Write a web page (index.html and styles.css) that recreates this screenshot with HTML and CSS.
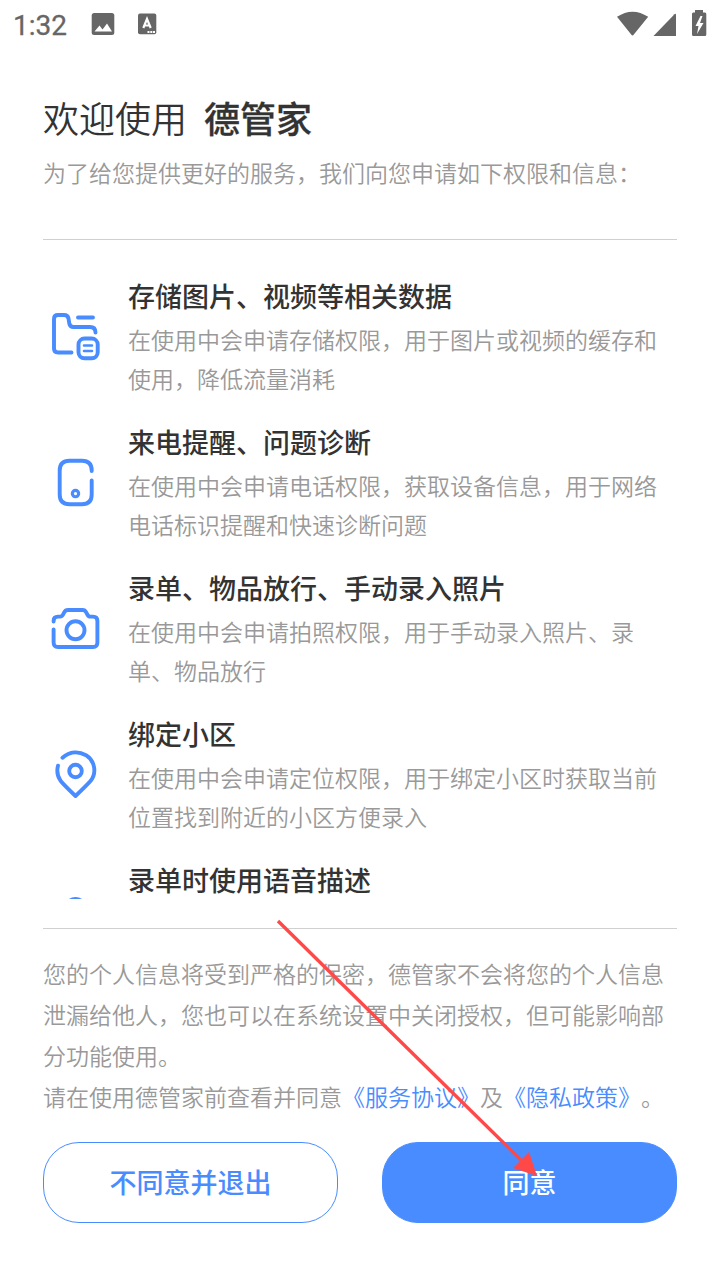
FILE: index.html
```html
<!DOCTYPE html>
<html lang="zh-CN">
<head>
<meta charset="utf-8">
<title>德管家</title>
<link rel="stylesheet" href="styles.css">
</head>
<body>
<div class="screen">
  <header class="status">
    <span class="clock">1:32</span>
    <svg class="status-left" width="70" height="50" viewBox="88 0 70 50">
      <rect x="91.7" y="13" width="22.6" height="22" rx="2.5"/>
      <path class="cut" d="M94.500 31.500L99.500 25.500L102.500 29.500L107 23.500L112 31.500Z"/>
      <rect x="138" y="13.500" width="18.300" height="20.800" rx="2"/>
      <path class="letter" d="M143.300 28L147 19L150.700 28M144.500 25.500H149.500"/>
      <path class="cut" d="M147.500 31h2v2h-2zM150.300 31h2v2h-2zM153 31h2v2h-2z"/>
    </svg>
    <svg class="status-right" width="100" height="50" viewBox="612 0 100 50">
      <path d="M617 16.800Q632.500 6.500 648.200 16.800L633.800 34.500Q632.500 36.500 631.200 34.500Z"/>
      <path d="M653.500 36L674.500 14.200Q676 13 676 14.800V36Z"/>
      <path d="M695 12.500V10H703V12.500H705Q706.300 12.500 706.300 14V34.500Q706.300 36 705 36H693.200Q692 36 692 34.500V14Q692 12.500 693.200 12.500Z"/>
      <path class="cut" d="M700.500 16L695.500 26H698.500L697 34L703.500 23H700L702.500 16Z"/>
    </svg>
  </header>

  <main class="content">
    <h1 class="welcome">欢迎使用<b class="brand">德管家</b></h1>
    <p class="intro">为了给您提供更好的服务，我们向您申请如下权限和信息：</p>

    <section class="permissions">
      <article class="item">
        <svg class="icon" viewBox="3 0 64 70">
          <path d="M31.500 52.500H18Q14 52.500 14 48.500V19Q14 15 18 15H24Q27.800 15 28.500 18.500L29.300 23.500Q30 27 33.500 27H50Q55.500 27 55.500 32.500M38 17.500H53"/>
          <rect x="38.500" y="38.500" width="19.200" height="19.800" rx="6"/>
          <path class="thin" d="M44 45.500H52M44 51H52"/>
        </svg>
        <div class="copy">
          <h2>存储图片、视频等相关数据</h2>
          <p>在使用中会申请存储权限，用于图片或视频的缓存和使用，降低流量消耗</p>
        </div>
      </article>
      <article class="item">
        <svg class="icon" viewBox="3 -4 64 70">
          <path d="M51.700 21V20.500Q51.700 10.800 42 10.800H29.500Q19.700 10.800 19.700 20.500V44.500Q19.700 54.200 29.500 54.200H42Q51.700 54.200 51.700 44.500V30.500"/>
          <circle class="dot" cx="35.500" cy="43.600" r="3.200"/>
        </svg>
        <div class="copy">
          <h2>来电提醒、问题诊断</h2>
          <p>在使用中会申请电话权限，获取设备信息，用于网络电话标识提醒和快速诊断问题</p>
        </div>
      </article>
      <article class="item">
        <svg class="icon" viewBox="3 -3 64 70">
          <path d="M13.600 26.500V26Q13.600 21.600 18 21.600H20Q22 21.600 23 19.700L24.200 17.300Q25.400 15 28 15H42.500Q45 15 46.200 17.300L47.500 19.700Q48.500 21.600 50.500 21.600H53Q57.400 21.600 57.400 26V47.500Q57.400 52 53 52H18Q13.600 52 13.600 47.500V34.500"/>
          <circle cx="35.500" cy="35.300" r="9"/>
        </svg>
        <div class="copy">
          <h2>录单、物品放行、手动录入照片</h2>
          <p>在使用中会申请拍照权限，用于手动录入照片、录单、物品放行</p>
        </div>
      </article>
      <article class="item">
        <svg class="icon" viewBox="3 -2 64 70">
          <path d="M22.500 17.800C30 11 39 11.300 46 15.200C55 21 57 33 50.500 41Q47 45 35.500 56Q24 45 20.700 41Q15.800 34 18 25.700"/>
          <circle cx="35.500" cy="31" r="6.300"/>
        </svg>
        <div class="copy">
          <h2>绑定小区</h2>
          <p>在使用中会申请定位权限，用于绑定小区时获取当前位置找到附近的小区方便录入</p>
        </div>
      </article>
      <article class="item">
        <svg class="icon" viewBox="3 -2 64 70">
          <rect x="25.500" y="13" width="20" height="28" rx="10"/>
        </svg>
        <div class="copy">
          <h2>录单时使用语音描述</h2>
        </div>
      </article>
    </section>

    <section class="notice">
      <p>您的个人信息将受到严格的保密，德管家不会将您的个人信息泄漏给他人，您也可以在系统设置中关闭授权，但可能影响部分功能使用。</p>
      <p>请在使用德管家前查看并同意<a class="link">《服务协议》</a>及<a class="link">《隐私政策》</a>。</p>
    </section>

    <div class="actions">
      <button class="btn outline">不同意并退出</button>
      <button class="btn primary">同意</button>
    </div>
  </main>

  <svg class="arrow" viewBox="0 0 270 270">
    <path class="shaft" d="M8 10L254 252"/>
    <path class="head" d="M267 265L259 241L243 257Z"/>
  </svg>
</div>
</body>
</html>
```

FILE: styles.css
```css
* { box-sizing: border-box; }
body {
  margin: 0;
  background: #fff;
  color: #333;
  font-family: "Noto Sans CJK SC", sans-serif;
  font-weight: 350;
  text-spacing-trim: space-all;
}
h1, h2, p { margin: 0; font-weight: inherit; }
.screen { position: relative; width: 720px; height: 1280px; overflow: hidden; }

.status { display: flex; height: 50px; fill: #666; color: #666; }
.clock {
  width: 88px;
  padding-left: 13px;
  font: 400 28px/52px Roboto, sans-serif;
  -webkit-text-stroke: 0.3px #666;
}
.status-right { margin-left: auto; margin-right: 8px; }
.cut { fill: #fff; }
.letter { fill: none; stroke: #fff; stroke-width: 2.2; }

.content { padding: 0 43px; }
.welcome { padding-top: 41px; font-size: 36px; line-height: 52px; }
.brand { margin-left: 17px; font-weight: 500; -webkit-text-stroke: 0.3px #333; }
.intro {
  padding-top: 9px;
  height: 97px;
  border-bottom: 1px solid #d0d0d0;
  color: #999;
  font-size: 23px;
  line-height: 40px;
  white-space: nowrap;
}

.permissions { height: 659px; padding-top: 36px; overflow: hidden; }
.item { display: flex; gap: 21px; height: 146px; }
.icon {
  flex: none;
  width: 64px;
  height: 70px;
  margin-top: 24px;
  fill: none;
  stroke: #488cff;
  stroke-width: 3.9;
  stroke-linecap: round;
  stroke-linejoin: round;
}
.thin { stroke-width: 2.6; }
.dot { stroke-width: 3.1; }
.copy { flex: 1; }
.copy h2 { font-size: 27px; line-height: 40px; font-weight: 500; }
.copy p { padding-top: 4px; color: #999; font-size: 23px; line-height: 39px; }

.notice {
  height: 214px;
  margin-top: 29px;
  padding-top: 24px;
  border-top: 1px solid #d0d0d0;
  color: #999;
  font-size: 23px;
  line-height: 41px;
}
.link { color: #488cff; }

.actions { display: flex; gap: 44px; }
.btn {
  flex: 1;
  height: 81px;
  padding: 0 0 2px;
  border: 1px solid #488cff;
  border-radius: 36px;
  font: 500 27px/77px "Noto Sans CJK SC", sans-serif;
}
.outline { background: #fff; color: #488cff; }
.primary { background: #488cff; color: #fff; }

/* Pointer annotation lying over the notice and the confirm button */
.arrow { position: absolute; left: 270px; top: 911px; width: 270px; height: 270px; }
.shaft { stroke: #ff4848; stroke-width: 3.4; fill: none; }
.head { fill: #ff4848; }
```
